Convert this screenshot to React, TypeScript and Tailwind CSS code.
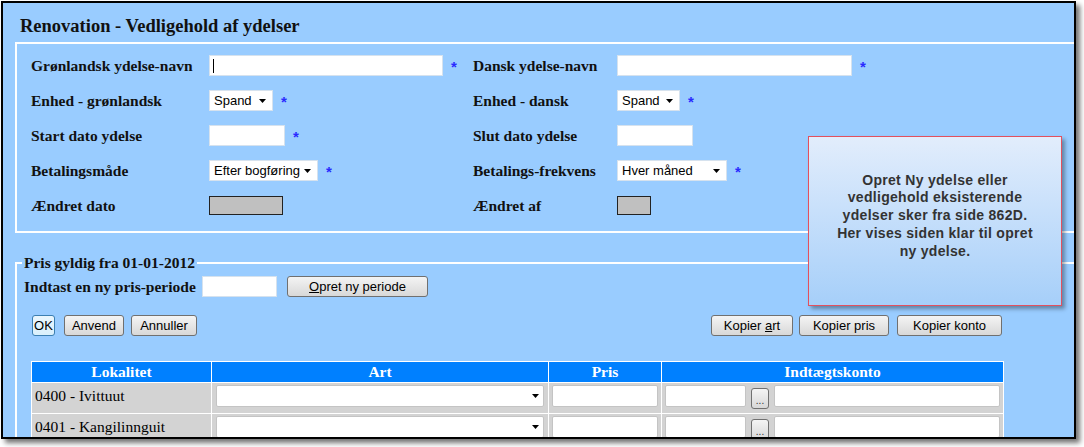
import React from "react";

const serif = { fontFamily: '"Liberation Serif", "Times New Roman", serif' };
const sans = { fontFamily: '"Liberation Sans", Arial, sans-serif' };

const Arrow = () => (
  <svg width="7" height="4" viewBox="0 0 7 4" className="shrink-0">
    <path d="M0 0 H7 L3.5 4 Z" fill="#000" />
  </svg>
);

const Star = () => (
  <span className="ml-[8px] mt-[2px] text-[15px] leading-none font-bold text-[#2a2aff]" style={sans}>
    *
  </span>
);

const Input = ({ w, cursor }: { w: string; cursor?: boolean }) => (
  <div className={`${w} h-[21px] bg-white border border-[#d6e2ee] flex items-center`}>
    {cursor && <div className="ml-[3px] w-px h-[14px] bg-black" />}
  </div>
);

const Select = ({ w, text }: { w: string; text: string }) => (
  <div
    className={`${w} h-[21px] bg-white border border-[#d6e2ee] flex items-center justify-between pl-[4px] pr-[6px] text-[13px] text-black`}
    style={sans}
  >
    <span>{text}</span>
    <Arrow />
  </div>
);

const Grey = ({ w }: { w: string }) => (
  <div className={`${w} h-[19px] bg-[#c0c0c0] border border-[#222]`} />
);

const Btn = ({ w, children, focus }: { w: string; children: React.ReactNode; focus?: boolean }) => (
  <div
    className={`${w} h-[21px] rounded-[3px] border flex items-center justify-center text-[13px] text-black ${
      focus
        ? "border-[#3c7fb1] bg-gradient-to-b from-[#eaf6fd] to-[#d9f0fc]"
        : "border-[#707070] bg-gradient-to-b from-[#f4f4f4] to-[#d8d8d8]"
    }`}
    style={sans}
  >
    {children}
  </div>
);

const Row = ({ children }: { children: React.ReactNode }) => (
  <div className="h-[35px] flex items-center">{children}</div>
);

const Label = ({ w, children }: { w: string; children: React.ReactNode }) => (
  <div className={`${w} shrink-0 font-bold text-[15.5px] text-[#111]`} style={serif}>
    {children}
  </div>
);

const Cell = ({ w, children }: { w: string; children?: React.ReactNode }) => (
  <div className={`${w} shrink-0 flex items-center`}>{children}</div>
);

const TableRow = ({ name }: { name: string }) => (
  <tr className="h-[31px] bg-[#d3d3d3]">
    <td className="border border-white align-top pl-[3px] pt-[1px] text-[15.5px] text-black" style={serif}>
      {name}
    </td>
    <td className="border border-white px-[4px] align-top pt-[2px]">
      <div className="h-[22px] bg-white border border-[#c4c4c4] rounded-[2px] flex items-center justify-end pr-[4px]">
        <Arrow />
      </div>
    </td>
    <td className="border border-white px-[3px] align-top pt-[2px]">
      <div className="h-[22px] bg-white border border-[#c4c4c4] rounded-[2px]" />
    </td>
    <td className="border border-white px-[3px] align-top pt-[2px]">
      <div className="flex items-start gap-[5px]">
        <div className="w-[81px] h-[22px] bg-white border border-[#c4c4c4] rounded-[2px]" />
        <div
          className="mt-[3px] w-[18px] h-[21px] rounded-[3px] border border-[#707070] bg-gradient-to-b from-[#f4f4f4] to-[#d8d8d8] flex items-end justify-center text-[10px] leading-[14px] text-[#333]"
          style={sans}
        >
          ...
        </div>
        <div className="w-[226px] h-[22px] bg-white border border-[#c4c4c4] rounded-[2px]" />
      </div>
    </td>
  </tr>
);

export default function App() {
  return (
    <div className="w-[1084px] h-[447px] bg-white pt-px pl-px">
      <div className="relative w-[1075px] h-[438px] bg-[#99ccff] border-2 border-black overflow-hidden shadow-[4px_4px_5px_rgba(0,0,0,0.55)]">
        {/* title */}
        <div className="h-[39px] pt-[13px] pl-[17px] text-[18.5px] leading-[20px] font-bold text-[#111]" style={serif}>
          Renovation - Vedligehold af ydelser
        </div>

        {/* Ydelse fields */}
        <div className="ml-[12px] h-[191px] border-2 border-r-0 border-white pl-[14px] pt-[4px]">
          <Row>
            <Label w="w-[178px]">Grønlandsk ydelse-navn</Label>
            <Cell w="w-[264px]">
              <Input w="w-[234px]" cursor />
              <Star />
            </Cell>
            <Label w="w-[144px]">Dansk ydelse-navn</Label>
            <Cell w="w-[260px]">
              <Input w="w-[235px]" />
              <Star />
            </Cell>
          </Row>
          <Row>
            <Label w="w-[178px]">Enhed - grønlandsk</Label>
            <Cell w="w-[264px]">
              <Select w="w-[64px]" text="Spand" />
              <Star />
            </Cell>
            <Label w="w-[144px]">Enhed - dansk</Label>
            <Cell w="w-[260px]">
              <Select w="w-[63px]" text="Spand" />
              <Star />
            </Cell>
          </Row>
          <Row>
            <Label w="w-[178px]">Start dato ydelse</Label>
            <Cell w="w-[264px]">
              <Input w="w-[76px]" />
              <Star />
            </Cell>
            <Label w="w-[144px]">Slut dato ydelse</Label>
            <Cell w="w-[260px]">
              <Input w="w-[76px]" />
            </Cell>
          </Row>
          <Row>
            <Label w="w-[178px]">Betalingsmåde</Label>
            <Cell w="w-[264px]">
              <Select w="w-[109px]" text="Efter bogføring" />
              <Star />
            </Cell>
            <Label w="w-[144px]">Betalings-frekvens</Label>
            <Cell w="w-[260px]">
              <Select w="w-[110px]" text="Hver måned" />
              <Star />
            </Cell>
          </Row>
          <Row>
            <Label w="w-[178px]">Ændret dato</Label>
            <Cell w="w-[264px]">
              <Grey w="w-[74px]" />
            </Cell>
            <Label w="w-[144px]">Ændret af</Label>
            <Cell w="w-[260px]">
              <Grey w="w-[34px]" />
            </Cell>
          </Row>
        </div>

        {/* Pris periode */}
        <fieldset className="mt-[21px] ml-[12px] border-2 border-r-0 border-b-0 border-white pl-[7px] pb-[20px]">
          <legend className="-ml-[2px] px-[2px] text-[15.5px] leading-[18px] font-bold text-[#111]" style={serif}>
            Pris gyldig fra 01-01-2012
          </legend>
          <div className="mt-[4px] flex items-center h-[21px]">
            <Label w="w-[178px]">Indtast en ny pris-periode</Label>
            <Input w="w-[75px]" />
            <div className="ml-[10px]">
              <Btn w="w-[141px]">
                <span>
                  <span className="underline">O</span>pret ny periode
                </span>
              </Btn>
            </div>
          </div>

          <div className="mt-[18px] ml-[8px] w-[970px] flex items-center">
            <Btn w="w-[23px]" focus>
              OK
            </Btn>
            <div className="ml-[9px]">
              <Btn w="w-[60px]">Anvend</Btn>
            </div>
            <div className="ml-[7px]">
              <Btn w="w-[66px]">Annuller</Btn>
            </div>
            <div className="ml-auto flex gap-[6px]">
              <Btn w="w-[82px]">
                <span>
                  Kopier <span className="underline">a</span>rt
                </span>
              </Btn>
              <Btn w="w-[90px]">Kopier pris</Btn>
              <div className="ml-[2px]">
                <Btn w="w-[105px]">Kopier konto</Btn>
              </div>
            </div>
          </div>

          <table className="mt-[25px] ml-[7px] w-[972px] table-fixed border-collapse">
            <colgroup>
              <col className="w-[180px]" />
              <col className="w-[337px]" />
              <col className="w-[113px]" />
              <col className="w-[342px]" />
            </colgroup>
            <thead>
              <tr className="h-[21px] bg-[#0080ff] text-white text-[15.5px] font-bold" style={serif}>
                <th className="border border-white leading-[18px]">Lokalitet</th>
                <th className="border border-white leading-[18px]">Art</th>
                <th className="border border-white leading-[18px]">Pris</th>
                <th className="border border-white leading-[18px]">Indtægtskonto</th>
              </tr>
            </thead>
            <tbody>
              <TableRow name="0400 - Ivittuut" />
              <TableRow name="0401 - Kangilinnguit" />
            </tbody>
          </table>
        </fieldset>

        {/* note */}
        <div className="absolute left-[805px] top-[133px] w-[254px] h-[170px] border border-[#e2505e] bg-gradient-to-b from-[#e2edfc] to-[#a6cff9] shadow-[3px_3px_4px_rgba(0,0,0,0.35)] flex items-center justify-center pb-[10px]">
          <div className="text-center text-[14px] leading-[17.7px] font-bold text-[#333] tracking-[0.3px]" style={sans}>
            Opret Ny ydelse eller
            <br />
            vedligehold eksisterende
            <br />
            ydelser sker fra side 862D.
            <br />
            Her vises siden klar til opret
            <br />
            ny ydelse.
          </div>
        </div>
      </div>
    </div>
  );
}
